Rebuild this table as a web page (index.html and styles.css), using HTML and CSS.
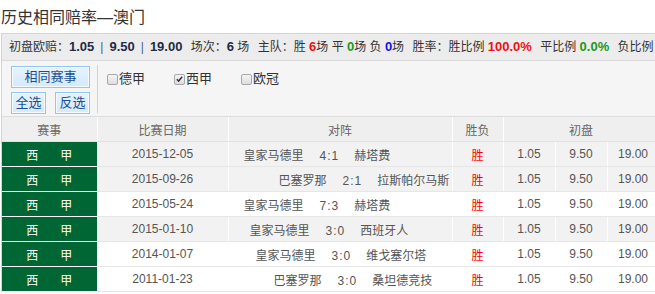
FILE: index.html
```html
<!DOCTYPE html>
<html lang="zh">
<head>
<meta charset="utf-8">
<title>历史相同赔率—澳门</title>
<link rel="stylesheet" href="styles.css">
</head>
<body>
<div class="title">历史相同赔率—澳门</div>
<div class="box">
  <div class="info">
    <span>初盘欧赔：</span><b class="num">1.05</b><span class="sep">|</span><b class="num">9.50</b><span class="sep">|</span><b class="num">19.00</b>
    <span class="gap">场次：</span><b class="num">6</b> 场
    <span class="gap">主队：</span>胜 <b class="num red">6</b>场 平 <b class="num green">0</b>场 负 <b class="num blue">0</b>场
    <span class="gap">胜率：</span>胜比例 <b class="num red">100.0%</b>
    <span class="gap">平比例</span> <b class="num green">0.0%</b>
    <span class="gap">负比例</span>
  </div>
  <div class="filter">
    <div class="btns">
      <button class="btn wide">相同赛事</button>
      <div class="btnrow">
        <button class="btn">全选</button>
        <button class="btn">反选</button>
      </div>
    </div>
    <div class="leagues">
      <label class="lg"><span class="cb"></span>德甲</label>
      <label class="lg"><span class="cb on"><svg viewBox="0 0 10 10" width="10" height="10"><path d="M2 5.2 L4 7.3 L8 2.6" fill="none" stroke="#333" stroke-width="1.6"/></svg></span>西甲</label>
      <label class="lg"><span class="cb"></span>欧冠</label>
    </div>
  </div>
  <table class="tbl">
    <colgroup>
      <col class="c1"><col class="c2"><col class="c3"><col class="c4"><col class="c5"><col class="c5"><col class="c5">
    </colgroup>
    <thead>
      <tr><th>赛事</th><th>比赛日期</th><th>对阵</th><th>胜负</th><th colspan="3">初盘</th></tr>
    </thead>
    <tbody>
      <tr class="gray">
        <td class="lgc"><span>西</span><span>甲</span></td><td>2015-12-05</td>
        <td class="vs" style="padding-left:15px"><span>皇家马德里</span><span class="score">4:1</span><span>赫塔费</span></td>
        <td class="res">胜</td><td>1.05</td><td>9.50</td><td>19.00</td>
      </tr>
      <tr class="gray">
        <td class="lgc"><span>西</span><span>甲</span></td><td>2015-09-26</td>
        <td class="vs" style="padding-left:50px"><span>巴塞罗那</span><span class="score">2:1</span><span>拉斯帕尔马斯</span></td>
        <td class="res">胜</td><td>1.05</td><td>9.50</td><td>19.00</td>
      </tr>
      <tr>
        <td class="lgc"><span>西</span><span>甲</span></td><td>2015-05-24</td>
        <td class="vs" style="padding-left:15px"><span>皇家马德里</span><span class="score">7:3</span><span>赫塔费</span></td>
        <td class="res">胜</td><td>1.05</td><td>9.50</td><td>19.00</td>
      </tr>
      <tr class="gray">
        <td class="lgc"><span>西</span><span>甲</span></td><td>2015-01-10</td>
        <td class="vs" style="padding-left:21px"><span>皇家马德里</span><span class="score">3:0</span><span>西班牙人</span></td>
        <td class="res">胜</td><td>1.05</td><td>9.50</td><td>19.00</td>
      </tr>
      <tr>
        <td class="lgc"><span>西</span><span>甲</span></td><td>2014-01-07</td>
        <td class="vs" style="padding-left:27px"><span>皇家马德里</span><span class="score">3:0</span><span>维戈塞尔塔</span></td>
        <td class="res">胜</td><td>1.05</td><td>9.50</td><td>19.00</td>
      </tr>
      <tr>
        <td class="lgc"><span>西</span><span>甲</span></td><td>2011-01-23</td>
        <td class="vs" style="padding-left:45px"><span>巴塞罗那</span><span class="score">3:0</span><span>桑坦德竞技</span></td>
        <td class="res">胜</td><td>1.05</td><td>9.50</td><td>19.00</td>
      </tr>
    </tbody>
  </table>
</div>
</body>
</html>
```
FILE: styles.css
```css
html, body {
  margin: 0;
  padding: 0;
  background: #fff;
}
body {
  width: 655px;
  height: 294px;
  overflow: hidden;
  font-family: "Liberation Sans", "Noto Sans CJK SC", sans-serif;
  font-size: 12px;
  color: #333;
}
.title {
  height: 33px;
  line-height: 35px;
  font-size: 16px;
  color: #333;
  padding-left: 1px;
  white-space: nowrap;
}
.box {
  margin-left: 1px;
  width: 670px;
  border-top: 1px solid #d4d4d4;
  border-left: 1px solid #d4d4d4;
}
.info {
  height: 26px;
  line-height: 26px;
  padding-left: 7px;
  background: #ececec;
  border-bottom: 1px solid #dadada;
  white-space: nowrap;
  overflow: hidden;
  color: #333;
}
.num {
  font-weight: bold;
  font-size: 13px;
  color: #1f2a44;
}
.sep {
  color: #4a5a80;
  margin: 0 6px;
}
.gap {
  margin-left: 5px;
}
.red { color: #f01010; }
.green { color: #1a9a1a; }
.blue { color: #1010f0; }

.filter {
  display: flex;
  height: 55px;
  background: #f5f5f5;
  border-bottom: 1px solid #dcdcdc;
}
.btns {
  width: 86px;
  margin: 4px 0 3px;
  padding: 1px 0 0 9px;
  border-right: 1px solid #c9d3e2;
  display: flex;
  flex-direction: column;
  gap: 4px;
}
.btn {
  height: 22px;
  padding: 0;
  margin: 0;
  border: 1px solid #93c5ef;
  background: linear-gradient(#e6f3fe, #d4e9fb);
  color: #1d4f8f;
  font-family: "Liberation Sans", "Noto Sans CJK SC", sans-serif;
  font-size: 13px;
  line-height: 20px;
  box-shadow: inset 0 0 0 1px #f2f9ff;
}
.btn.wide {
  width: 79px;
}
.btnrow {
  display: flex;
  gap: 9px;
}
.btnrow .btn {
  width: 35px;
}
.leagues {
  display: flex;
  align-items: flex-start;
  padding: 11px 0 0 9px;
}
.lg {
  display: flex;
  align-items: center;
  width: 67px;
  font-size: 13px;
  line-height: 14px;
  color: #333;
}
.cb {
  width: 9px;
  height: 9px;
  border: 1px solid #a8a8a8;
  border-radius: 2px;
  background: linear-gradient(#f4f4f4, #dedede);
  margin-right: 1px;
  display: flex;
  align-items: center;
  justify-content: center;
}
.cb svg {
  display: block;
}

.tbl {
  border-collapse: collapse;
  table-layout: fixed;
  width: 657px;
}
.c1 { width: 95px; }
.c2 { width: 131px; }
.c3 { width: 224px; }
.c4 { width: 51px; }
.c5 { width: 52px; }
.tbl th {
  height: 24px;
  padding: 0;
  background: #efefef;
  color: #666;
  font-weight: normal;
  font-size: 12px;
  border-right: 1px solid #fff;
  border-bottom: 1px solid #e2e2e2;
}
.tbl td {
  height: 24px;
  padding: 0;
  text-align: center;
  color: #555;
  font-size: 12px;
  white-space: nowrap;
  border-right: 1px solid #fff;
  border-bottom: 1px solid #e6e6e6;
}
.tbl tr.gray td {
  background: #f2f2f2;
}
.tbl td.lgc {
  background: #006633;
  color: #fff;
  border-bottom: 1px solid #fff;
}
.tbl tr.gray td.lgc {
  background: #006633;
}
.lgc span {
  display: inline-block;
  margin: 0 11px;
}
.tbl td.vs {
  text-align: left;
}
.score {
  display: inline-block;
  margin: 0 15px 0 16px;
  letter-spacing: 1px;
}
.tbl td.res {
  color: #f00;
}
```
